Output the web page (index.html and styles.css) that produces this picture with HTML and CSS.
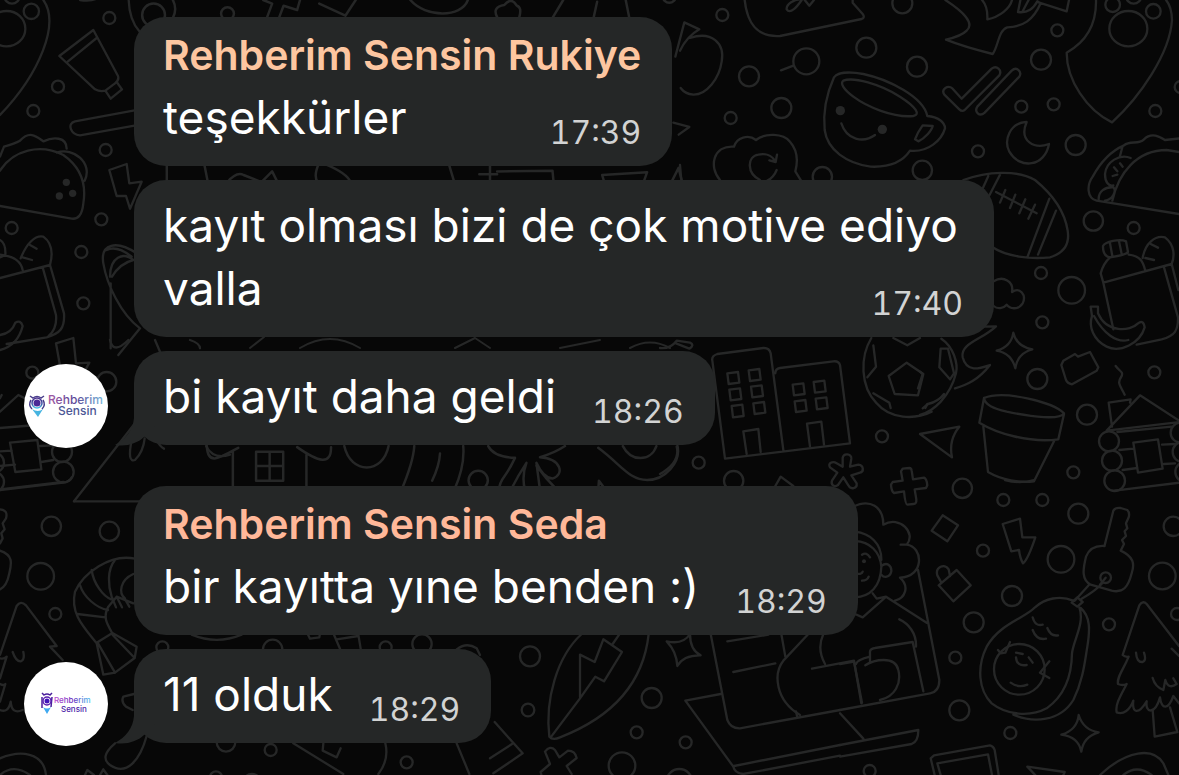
FILE: index.html
```html
<!DOCTYPE html>
<html lang="tr">
<head>
<meta charset="utf-8">
<title>Rehberim Sensin</title>
<link rel="stylesheet" href="styles.css">
</head>
<body>
<svg class="wallpaper" viewBox="0 0 1179 775" preserveAspectRatio="xMinYMin slice" aria-hidden="true">
  <g transform="translate(680 0) scale(.33333)">
    <circle cx="127" cy="45" r="18"/><circle cx="207" cy="229" r="30"/><circle cx="379" cy="184" r="39"/><circle cx="559" cy="143" r="30"/><circle cx="711" cy="200" r="30"/><circle cx="304" cy="324" r="30"/><circle cx="152" cy="354" r="18"/><circle cx="667" cy="10" r="30"/><circle cx="427" cy="530" r="29"/><circle cx="727" cy="511" r="29"/>
    <path d="M303 211L340 197M194 0C202 72 232 112 300 108L545 57Q556 52 548 42L518 8V0M365 0C350 22 330 44 320 28C318 12 345 -2 358 -2M374 0L388 17L402 0"/>
    <path d="M-14 170L13 67L58 88Q20 110 0 152M30 114C95 92 135 130 125 185C118 235 80 285 40 284Q15 282 2 264M-20 368L28 381L-4 404M0 495L4 540"/>
    <path d="M462 232C472 218 505 214 550 222C625 238 730 290 742 348C775 350 795 368 795 385C785 420 745 458 690 452C665 490 620 502 572 500C500 490 442 450 434 390C428 330 445 270 462 232Z"/>
    <path d="M490 242C520 230 600 252 660 290C710 322 722 344 700 348C640 354 560 320 520 290C490 268 480 250 490 242ZM484 370C500 420 550 430 585 405M728 376L758 378C755 392 735 415 715 424L705 418Q712 398 728 376Z"/>
    <circle class="dot" cx="481" cy="332" r="14"/><circle class="dot" cx="607" cy="388" r="14"/>
    <path d="M120 540C85 500 100 435 162 440C170 412 205 402 228 420C255 398 310 400 330 425C352 450 355 480 346 514L365 545M290 510C282 530 270 538 262 542M240 540C200 520 200 470 235 464C255 460 275 465 284 482M291 464L287 486L268 481"/>
  </g>
  <g transform="translate(920 0) scale(.33333)">
    <circle cx="412" cy="91" r="18"/><circle cx="363" cy="179" r="30"/><circle cx="304" cy="320" r="18"/><circle cx="401" cy="313" r="18"/><circle cx="174" cy="454" r="18"/><circle cx="467" cy="435" r="30"/><circle cx="706" cy="333" r="18"/><circle cx="520" cy="663" r="29"/><circle cx="641" cy="684" r="18"/><circle cx="782" cy="261" r="18"/><circle cx="578" cy="14" r="22"/><circle cx="641" cy="-12" r="23"/><circle cx="700" cy="34" r="22"/>
    <ellipse cx="625" cy="86" rx="57" ry="53"/>
    <path d="M528 0C530 80 490 130 440 158C440 240 500 330 576 367C660 290 750 160 756 60Q755 20 738 0"/>
    <path d="M76 0C130 35 165 70 140 92Q125 108 78 119C130 140 170 150 218 162C235 140 235 90 262 82C310 80 340 60 362 10M186 0C200 15 203 35 202 58C240 50 270 25 276 0M302 -4L294 36C325 40 340 25 352 4L358 8L440 34L447 0M308 34L330 -8"/>
    <path d="M98 266L125 296L215 206C230 195 247 210 238 226L134 330Q126 336 118 328L73 284C62 266 84 254 98 266ZM172 320L275 212C290 198 307 215 298 230L194 338C178 352 162 335 172 320Z"/>
    <path d="M320 366C270 368 250 420 268 455C300 510 375 500 387 432C345 448 295 425 320 366Z"/>
    <path d="M130 540C200 515 290 508 345 540C400 585 435 640 443 692C450 735 430 760 390 772C330 778 260 770 218 742M205 528L186 570M240 524L204 594M388 596L322 772M408 632L354 764M228 576L350 640M256 570L240 608M286 584L270 624M316 598L298 640M345 614L325 656"/>
    <path d="M777 642L530 602C500 595 500 555 518 530C545 480 580 450 612 436C630 420 655 435 672 418C695 395 720 410 735 420L790 414M577 602C595 520 650 450 740 450L790 458M608 438L600 468M632 474C600 460 558 485 555 522C555 545 565 560 580 556M536 598C535 575 555 560 580 562C592 575 575 600 555 602M582 502L592 514M600 490L608 500M578 528L592 524"/>
  </g>
  <g transform="translate(920 230) scale(.33333)">
    <circle cx="363" cy="129" r="18"/><circle cx="455" cy="181" r="40"/><circle cx="367" cy="277" r="18"/><circle cx="352" cy="447" r="30"/><circle cx="703" cy="427" r="18"/><circle cx="501" cy="554" r="30"/><circle cx="460" cy="727" r="18"/>
    <path d="M221 154C250 135 282 155 276 186C300 170 320 195 308 220C295 240 270 238 260 224C250 236 232 238 221 228"/>
    <path d="M280 308Q290 350 337 358Q292 370 286 415Q275 370 230 362Q274 350 280 308ZM430 392L465 372L474 380L510 366L535 412L530 422L456 463Q442 460 438 450L424 405Z"/>
    <path d="M188 290L228 289C185 330 120 340 128 382C140 430 180 415 210 405C175 450 140 465 105 475M64 326C100 350 115 400 108 430C90 500 40 545 0 555M62 356L84 356L102 430L90 448L58 412ZM0 425L8 432L-6 475M8 535L24 522Q55 515 72 492"/>
    <path d="M192 504C250 480 400 515 432 550C420 570 340 562 260 545C220 535 195 525 192 504L178 578C230 610 330 640 415 628L432 552M190 590L204 726C245 750 300 760 342 754L402 634"/>
    <path d="M0 612L118 590Q85 630 96 682Z"/>
    <path d="M549 48C555 35 600 25 618 34L624 66Q618 75 570 82Q548 78 549 48ZM570 40L577 78M597 34L605 72M570 82Q550 100 542 130L550 158L580 298M550 158L755 102M626 74C658 78 668 90 676 122M668 84C675 40 705 15 735 22C765 45 764 80 755 102L775 180M732 112L774 262C775 300 765 318 725 328L650 344M692 42L714 53M676 84L702 90"/>
    <path d="M512 230L534 230L534 250C560 310 630 305 654 280Q670 268 674 292C660 340 600 370 560 350C520 330 505 290 516 258ZM522 258C550 310 590 340 625 330"/>
    <path d="M587 408C600 425 610 425 605 438C590 460 600 465 614 494M566 518L632 508L630 518M566 518L576 590M560 602L660 496L780 574M560 602L780 576M592 606L755 590M598 660L640 656M726 644L765 642M608 720L652 714M732 702L765 700M584 782L780 758M640 638L714 628L728 716L654 728Z"/>
    <circle cx="567" cy="634" r="30"/><circle cx="576" cy="692" r="30"/><circle cx="584" cy="752" r="31"/><circle cx="782" cy="608" r="30"/><circle cx="788" cy="666" r="30"/><circle cx="796" cy="726" r="30"/>
  </g>
  <g transform="translate(660 330) scale(.33333)">
    <circle cx="666" cy="319" r="18"/><circle cx="116" cy="398" r="18"/><circle cx="221" cy="452" r="29"/>
    <path d="M195 386L157 92Q154 78 172 72L310 54Q328 53 332 70L370 360M195 386L570 340L540 105Q536 92 520 94L360 114Q346 116 346 130"/>
    <path d="M202 130L234 126L238 158L206 162ZM266 121L298 117L302 149L270 153ZM208 179L240 175L244 207L212 211ZM273 170L305 166L309 198L277 202ZM215 228L247 224L251 258L219 262ZM280 220L312 216L316 248L284 252ZM398 164L430 160L434 192L402 196ZM461 156L493 152L497 184L465 188ZM404 214L436 210L440 242L408 246ZM467 206L499 202L503 234L471 238ZM260 372L250 304L295 297L302 366M450 350L441 281L484 275L492 344"/>
    <path d="M634 24C600 80 600 170 650 220C690 268 765 270 815 245M700 24L742 46L780 24M740 98L790 132L774 196L704 192L686 138ZM640 46L648 110L622 142M640 190L688 218L692 234M796 234L802 222"/>
    <path d="M0 54Q30 58 50 32L90 38Q105 45 88 56L48 40M50 350C60 390 30 415 0 432M346 468L362 440L400 468"/>
    <path d="M548 384C550 368 575 370 574 386L570 410L595 404C612 406 612 426 600 428L574 436L590 460C592 476 572 480 565 466L550 442L534 465C522 474 512 464 516 452L532 428L510 412C502 400 518 392 530 400L548 410Z"/>
    <path d="M728 416L748 414Q754 414 755 422L759 448L792 443Q800 446 802 466L798 474L764 478L769 508Q770 522 760 522L742 524Q736 524 732 484L702 489Q694 484 693 464L698 456L728 452L723 424Z"/>
  </g>
  <g transform="translate(840 480) scale(.33333)">
    <circle cx="367" cy="25" r="29"/><circle cx="490" cy="60" r="18"/><circle cx="607" cy="60" r="18"/><circle cx="715" cy="101" r="30"/><circle cx="429" cy="212" r="18"/><circle cx="663" cy="238" r="40"/><circle cx="1000" cy="139" r="29"/><circle cx="967" cy="288" r="40"/><circle cx="516" cy="348" r="30"/><circle cx="401" cy="427" r="30"/><circle cx="807" cy="433" r="18"/><circle cx="1011" cy="402" r="18"/><circle cx="346" cy="533" r="18"/><circle cx="358" cy="691" r="30"/><circle cx="511" cy="759" r="18"/><circle cx="89" cy="873" r="18"/>
    <path d="M308 106L354 136L322 184L275 152ZM488 132L540 116L547 172L586 172C575 205 562 240 549 250Q540 235 537 210L514 214ZM296 316L350 270L392 316L340 364ZM304 308L292 286C285 262 314 248 326 268L330 288"/>
    <path d="M40 80C90 55 130 80 130 134C180 105 230 160 200 194L182 194M200 194C250 200 255 290 180 293C210 320 195 355 165 362M45 155C90 160 125 190 124 240M45 183C90 185 120 215 124 260C122 320 90 350 45 352M124 258C140 245 155 255 154 274C150 295 130 292 126 286M66 224Q80 215 90 232M50 280Q65 285 68 275M66 302Q82 302 86 290M98 340L110 356L138 350L260 428M136 352L68 412L45 402M178 418C205 430 230 460 228 500M234 270L298 600Q298 635 270 640L0 690M90 545V520Q88 506 105 504L218 486L250 634M76 556C100 540 165 525 175 570C185 610 165 650 120 660M0 552L42 545L66 668M90 530Q50 540 48 552M0 700L70 776M0 795L235 750Q235 785 215 792L0 830"/>
    <circle class="dot" cx="72" cy="244" r="6"/>
    <path d="M794 196L820 92Q826 82 842 84L862 90Q870 98 866 112L858 130L862 145L854 154L858 168L846 180L852 192L842 212C880 230 885 250 875 280C865 320 850 340 815 332L752 314C725 300 728 270 738 230C748 205 770 196 794 198M746 316L704 362M788 308Q770 330 725 356M695 368L712 352L728 366L712 380Z"/><circle cx="797" cy="293" r="16"/><path d="M797 293L780 314"/>
    <path d="M700 362C660 345 615 355 585 382C555 415 480 430 440 500C410 560 415 630 455 670C500 705 570 712 620 685C670 650 695 590 696 520C700 480 735 430 718 382M520 704C580 730 660 725 700 660C730 600 735 540 742 500C750 450 752 410 722 384"/>
    <circle cx="538" cy="568" r="76"/><path d="M474 510L482 520L496 518L510 486M628 544L600 578L628 594M578 412Q585 440 608 434M578 450Q590 482 618 476M622 444Q632 470 654 466M528 518L548 522M528 532Q530 560 560 555M566 532L578 548M512 608Q535 625 562 614"/>
    <path d="M1017 498L920 372Q908 360 898 376L848 525Q855 532 866 530C850 570 830 590 834 612Q848 618 860 612C840 650 825 675 830 697C850 705 870 690 880 662C875 700 895 705 920 664C915 700 945 705 960 652C965 690 985 690 1000 648L1017 670M1017 528L995 506M888 518Q890 548 908 546Q920 542 912 518M938 594Q945 620 970 630L976 600Q985 630 1010 612L1000 595M938 690L944 770L1012 756L990 682"/>
    <path d="M716 705Q730 750 776 757Q730 770 724 815Q715 770 664 764Q712 750 716 705ZM284 885L272 835L282 826L450 796Q460 798 464 810L476 885M302 885L292 850L444 823L456 885M590 890L562 860L674 876L668 890M780 885C860 810 940 800 970 850L985 885M850 885Q890 852 935 885"/>
    <path d="M495 0Q540 12 582 0"/>
  </g>
  <g transform="translate(490 620) scale(.33333)">
    <circle cx="120" cy="109" r="30"/><circle cx="114" cy="270" r="19"/><circle cx="485" cy="234" r="30"/><circle cx="440" cy="337" r="18"/><circle cx="587" cy="367" r="18"/><circle cx="396" cy="437" r="40"/><circle cx="568" cy="486" r="39"/>
    <path d="M275 42C200 110 165 240 178 350Q188 362 210 352C370 290 460 190 476 42M182 352L270 235L316 170L342 184L396 96L340 58L314 126L270 104V232M368 72L390 40M530 64Q580 75 600 42Q600 90 632 106Q580 105 562 138Q560 95 530 64Z"/>
    <path d="M14 306L98 400L10 460M66 372L0 415M165 395Q180 375 195 390L208 412L234 392Q255 392 260 414L230 438L245 462M165 395L180 432L152 456L158 480"/>
    <path d="M662 42L712 300Q722 326 750 325L1050 270M692 222L586 242L730 440Q735 460 760 462L1050 407M732 438L1050 375M712 64L835 44M730 156L856 130M874 42L886 110M955 42L880 122C850 160 855 240 930 285M1000 42C985 75 990 105 1005 132M966 146L1092 122L1114 250"/>
    <path d="M918 274L922 292"/>
  </g>
  <g transform="scale(.33333)">
    <circle cx="328" cy="54" r="18"/><circle cx="94" cy="34" r="23"/><circle cx="36" cy="-12" r="23"/><circle cx="174" cy="260" r="18"/><circle cx="100" cy="333" r="18"/><circle cx="317" cy="450" r="18"/><circle cx="304" cy="658" r="18"/><circle cx="35" cy="684" r="18"/><circle cx="244" cy="756" r="18"/><circle cx="250" cy="910" r="18"/>
    <ellipse cx="20" cy="86" rx="56" ry="53"/>
    <path d="M130 0C180 70 120 220 0 345M178 168L280 90L354 228Q358 240 345 250L316 272Q300 276 285 268ZM204 184L290 114M316 272L332 296L366 268L350 246M420 328L225 364C200 370 212 405 240 406L420 374M386 0Q388 60 418 94M240 0Q270 5 290 -4"/>
    <path d="M0 618L215 656Q245 660 250 610C260 550 240 500 190 465C120 430 40 450 0 512M0 470L12 440Q45 430 60 422C90 390 110 410 130 424C160 410 200 410 200 446M170 458C220 440 280 490 254 542"/>
    <circle class="dot" cx="199" cy="547" r="11"/><circle class="dot" cx="178" cy="588" r="11"/><circle class="dot" cx="218" cy="580" r="11"/>
    <path d="M328 510L380 492L388 550L425 545L390 626L378 588L350 588ZM0 720Q18 730 16 765L0 772M0 764Q60 770 68 810M0 834L150 795M62 775C80 730 105 705 130 710C158 730 158 765 150 795L192 940C195 985 180 1000 140 1012L20 1032M128 802L168 945Q172 985 146 1008M90 735L110 746M68 772L96 780M0 1005Q35 1000 46 968Q62 958 68 978C60 1010 40 1040 0 1050"/>
    <path d="M420 985C360 940 320 850 310 790C300 730 350 720 410 760M320 750Q350 735 395 770M330 830C330 770 370 755 400 780Q360 790 336 830M332 850V1045M420 985L355 1065M168 1030L220 1014L228 1090L268 1088L240 1140M168 1030L182 1108L208 1108L216 1140"/>
  </g>
  <g transform="translate(0 340) scale(.33333)">
    <circle cx="97" cy="98" r="18"/><circle cx="320" cy="125" r="29"/><circle cx="186" cy="336" r="30"/><circle cx="190" cy="396" r="31"/><circle cx="-18" cy="368" r="30"/><circle cx="-18" cy="426" r="30"/>
    <path d="M0 264L110 255M0 215L55 165L75 175M0 175L5 165M0 334L35 332M0 378L45 374M120 318L160 316M124 366L160 360M0 448L190 426M30 308L112 300L124 388L46 396ZM222 484L405 250M330 0Q340 45 385 0M465 0L480 35M570 0Q600 10 600 25"/>
    <path d="M395 300C385 350 390 365 405 360Q430 335 434 295M470 300Q480 320 492 326M618 318Q640 360 690 344"/>
  </g>
  <g transform="translate(0 480) scale(.33333)">
    <circle cx="154" cy="139" r="29"/><circle cx="328" cy="154" r="29"/><circle cx="122" cy="289" r="40"/><circle cx="166" cy="402" r="18"/>
    <path d="M0 30L190 8Q210 4 215 -8M222 64H420M0 88Q25 90 18 115L8 130L14 148L4 160L8 175L0 190M0 212C40 225 35 250 28 280Q20 320 0 328"/>
    <path d="M0 525L50 378Q62 360 78 376L170 498L150 500L188 540M0 535Q12 538 20 530L0 595M0 612Q10 618 16 612L0 665M38 516Q48 545 62 544Q75 540 70 516M0 690Q25 700 32 665Q35 705 68 690M0 835C60 810 130 815 138 885M0 885Q40 850 90 885M255 885L262 870L282 885M300 885L310 868L322 885"/>
    <path d="M405 236C330 220 250 280 225 335C210 400 250 440 290 490L310 584L345 578L404 534L410 500L336 458C320 430 308 410 325 380L350 350L400 370M275 270C280 310 310 350 334 358M240 315C250 350 290 385 324 390M232 402L316 412M345 240C320 270 325 320 335 350M400 282C360 300 355 340 375 355M290 488L336 460M338 465L404 534M294 490L345 578M336 352L348 382M350 350L366 382M372 352L388 380"/>
    <path d="M402 642L370 650Q362 665 378 680L398 690M345 790C310 820 310 840 330 855C380 890 420 840 440 768"/>
  </g>
  <g transform="translate(140 430) scale(.35714)">
    <circle cx="947" cy="141" r="27"/>
    <path d="M187 45C190 100 220 80 275 50M260 60V168M440 48C500 90 535 100 535 48M466 70V168M325 61H401V142H325ZM363 61V142M325 101H401M572 45C590 125 680 125 696 45M768 45Q765 90 732 168M905 45Q910 100 880 168M840 66Q838 100 818 142M975 45Q990 75 1050 78Q1035 110 1020 130Q1005 150 1006 168M1190 45Q1160 65 1120 76C1180 80 1190 125 1155 136Q1130 135 1110 92L1120 168M1038 168Q1060 125 1082 92Q1068 130 1078 168M1110 100Q1135 135 1168 168M1283 50C1350 100 1370 140 1420 140C1470 140 1515 90 1505 45M1352 45C1375 90 1430 90 1446 45M1283 168L1285 142L1304 168"/>
  </g>
  <g transform="translate(140 0) scale(.35714)">
    <circle cx="38" cy="42" r="32"/><circle cx="245" cy="38" r="18"/><circle cx="1482" cy="-10" r="18"/><circle cx="740" cy="545" r="18"/>
    <path d="M92 0Q105 25 92 50M345 0L370 10L356 48M390 48L402 16L440 28L448 0M502 10L575 44L604 0M757 0C800 50 900 50 918 0M1000 48Q985 20 1020 14Q1040 -10 1055 16Q1070 20 1062 48M1155 50L1185 0M1280 5L1270 50M1360 0L1370 50M75 460V510M180 460L190 510M245 510Q270 480 290 490L340 510L370 480L385 510M500 460Q485 495 498 510M520 460Q580 485 590 510M865 460L880 510M980 460V510M950 488H1000M1000 480L1155 478L1158 510M1300 510L1294 490L1420 482L1410 510M1488 510L1508 470L1518 510"/>
  </g>
  <g transform="translate(110 630) scale(.33333)">
    <circle cx="157" cy="52" r="18"/><circle cx="488" cy="58" r="29"/><circle cx="827" cy="52" r="18"/><circle cx="936" cy="42" r="29"/><circle cx="348" cy="337" r="28"/><circle cx="482" cy="360" r="18"/><circle cx="890" cy="397" r="18"/><circle cx="318" cy="442" r="18"/><circle cx="426" cy="460" r="28"/>
    <path d="M245 14Q320 45 395 14M592 10L600 26L628 22L630 10M672 14L690 56M745 14L752 56M680 28L745 18M1040 58Q1070 35 1100 55L1110 75M550 340L700 432M640 340L638 362L680 382L692 355M826 340Q838 390 805 432M1040 340L1078 432"/>
  </g>
  <path d="M250 348L264 337M300 348Q330 330 360 348M455 348L475 338L490 348M560 348L600 340M630 348Q650 337 670 348"/>
</svg>

<main class="chat">
  <section class="group">
    <article class="row">
      <div class="bubble">
        <h2 class="name">Rehberim Sensin Rukiye</h2>
        <p class="text">teşekkürler<time class="time">17:39</time></p>
      </div>
    </article>
    <article class="row">
      <div class="bubble">
        <p class="text">kayıt olması bizi de çok motive ediyo valla<time class="time">17:40</time></p>
      </div>
    </article>
    <article class="row">
      <svg class="avatar" viewBox="0 0 84 84" role="img" aria-label="Rehberim Sensin">
        <defs>
          <linearGradient id="wide" x1="0" x2="1"><stop offset="0" stop-color="#a45aa5"/><stop offset=".5" stop-color="#5a4796"/><stop offset="1" stop-color="#79b7dc"/></linearGradient>
          <linearGradient id="pin" x1="0" x2="0" y1="0" y2="1"><stop offset="0" stop-color="#4a2f8c"/><stop offset=".6" stop-color="#3d58a8"/><stop offset="1" stop-color="#4bc4ea"/></linearGradient>
        </defs>
        <path d="M8 45Q14 49 19 45L14 53Z" fill="#46b4e0"/>
        <path d="M6 32L9 34Q13 31 17 34L20 32M7 36Q4 41 8 45M19 36Q22 41 18 45" fill="none" stroke="#4a3f8c" stroke-width="1.5"/>
        <circle cx="13" cy="39" r="5" fill="#fff" stroke="url(#pin)" stroke-width="1.5"/><circle cx="13" cy="39" r="3.5" fill="#4b2a96"/>
        <text class="logo" x="24" y="40" fill="url(#wide)">Rehberim</text>
        <text class="logo" x="34" y="51" fill="#4c5796">Sensin</text>
      </svg>
      <div class="bubble">
        <svg class="tail" viewBox="0 0 40 40" aria-hidden="true"><path d="M19 0V12C18 24 11 33 0 39C12 41 23 37 29 31L40 20V0Z"/></svg>
        <p class="text">bi kayıt daha geldi<time class="time">18:26</time></p>
      </div>
    </article>
  </section>
  <section class="group">
    <article class="row">
      <div class="bubble">
        <h2 class="name name-seda">Rehberim Sensin Seda</h2>
        <p class="text">bir kayıtta yıne benden :)<time class="time">18:29</time></p>
      </div>
    </article>
    <article class="row">
      <svg class="avatar" viewBox="0 0 84 84" role="img" aria-label="Rehberim Sensin">
        <defs>
          <linearGradient id="small" x1="0" x2="1"><stop offset="0" stop-color="#c04fd0"/><stop offset=".5" stop-color="#6a2fc0"/><stop offset="1" stop-color="#4fc0ee"/></linearGradient>
        </defs>
        <path d="M19 45Q23 48 27 45L23 52Z" fill="#3fa9f0"/>
        <path d="M18 31L20 33Q23 31 26 33L28 31M18 35V46M28 35L27 45" fill="none" stroke="#4a1f9c" stroke-width="1.5"/>
        <circle cx="23" cy="39" r="4" fill="#fff" stroke="#5a20b0" stroke-width="1.5"/><circle cx="23" cy="39" r="2.5" fill="#4014b8"/>
        <text class="logo logo-small" x="30" y="41" fill="url(#small)">Rehberim</text>
        <text class="logo logo-small" x="37" y="50" fill="#4a22a8">Sensin</text>
      </svg>
      <div class="bubble">
        <svg class="tail" viewBox="0 0 40 40" aria-hidden="true"><path d="M19 0V12C18 24 11 33 0 39C12 41 23 37 29 31L40 20V0Z"/></svg>
        <p class="text">11 olduk<time class="time">18:29</time></p>
      </div>
    </article>
  </section>
</main>
</body>
</html>
```
FILE: styles.css
```css
* { box-sizing: border-box; }

body {
  margin: 0;
  min-height: 100vh;
  overflow: hidden;
  background: #070707;
  color: #fff;
  font-family: Inter, "Liberation Sans", sans-serif;
}

.wallpaper {
  position: absolute;
  inset: 0;
  width: 100%;
  height: 100%;
  fill: none;
  stroke: #262727;
  stroke-width: 7;
  stroke-linecap: round;
  stroke-linejoin: round;
}
.wallpaper > path { stroke-width: 2; }
.wallpaper .dot { fill: #262727; stroke: none; }

.chat {
  position: relative;
  display: flex;
  flex-direction: column;
  gap: 41px;
  padding: 17px 24px;
}
.group {
  display: flex;
  flex-direction: column;
  gap: 14px;
}
.row {
  display: grid;
  grid-template-columns: 84px minmax(0, 1fr);
  column-gap: 26px;
  align-items: end;
}

.avatar {
  width: 84px;
  height: 84px;
  margin-bottom: -3px;
  border-radius: 50%;
  background: #fff;
}
.logo { font-size: 12px; font-weight: 500; }
.logo-small { font-size: 8px; }

.bubble {
  grid-column: 2;
  justify-self: start;
  position: relative;
  max-width: 860px;
  padding: 14px 31px 13px 29px;
  border-radius: 32px;
  background: #252727;
}
.tail {
  position: absolute;
  left: -19px;
  bottom: -1px;
  width: 40px;
  height: 40px;
  fill: #252727;
}
.name {
  margin: 0 0 7px;
  font-size: 41px;
  font-weight: 600;
  line-height: 48px;
  color: #fdc6a0;
}
.name-seda { color: #ffb899; }
.text {
  display: flow-root;
  margin: 0;
  font-size: 46px;
  line-height: 63px;
}
.time {
  float: right;
  margin: 27px 0 0 36px;
  font-size: 32px;
  line-height: 40px;
  font-variant-numeric: tabular-nums;
  color: #d2d3d3;
}
```
